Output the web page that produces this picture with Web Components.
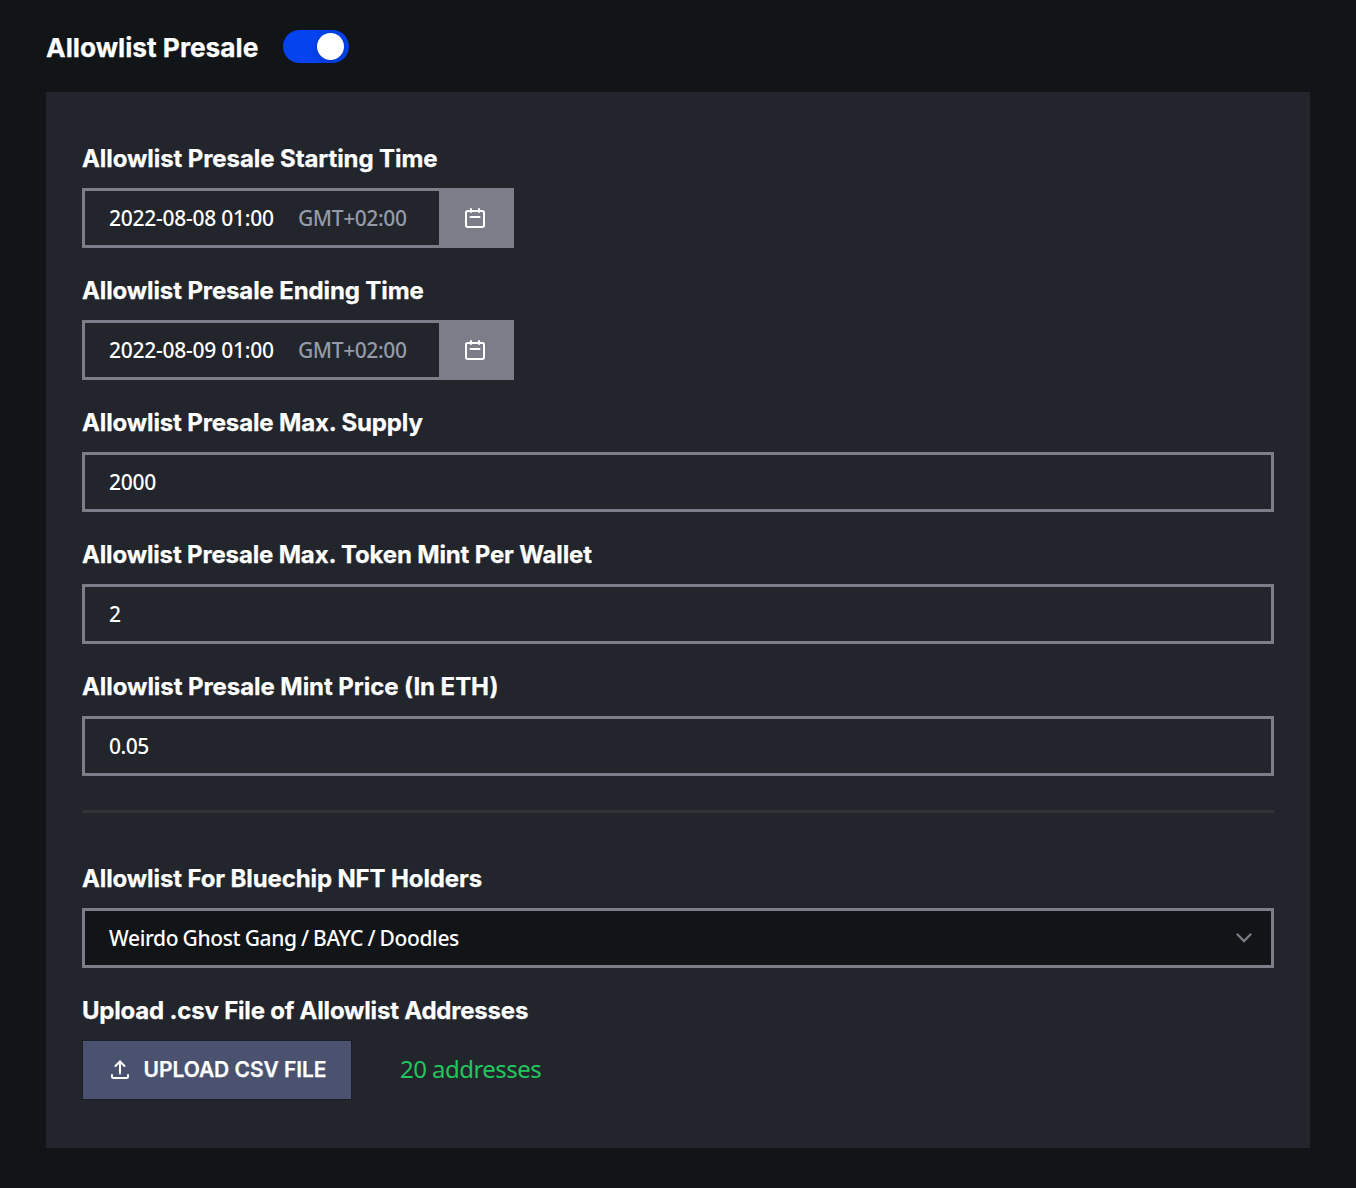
<!DOCTYPE html>
<html lang="en">
<head>
<meta charset="utf-8">
<title>Allowlist Presale</title>
<style>
html,body{margin:0;background:#111518;color:#fff;font-family:Inter,"Liberation Sans",sans-serif}
</style>
</head>
<body>
<presale-page></presale-page>
<script>
const define = (name, markup) => customElements.define(name, class extends HTMLElement {
  constructor() {
    super();
    this.attachShadow({ mode: 'open' }).innerHTML = markup;
  }
});

define('toggle-switch', `<style>
:host{display:flex;box-sizing:border-box;width:66px;height:33px;padding:3px 5px;border-radius:17px;background:#0443ee;justify-content:flex-end;align-items:center}
i{width:27px;height:27px;border-radius:50%;background:#fff;box-shadow:0 2px 6px rgba(0,20,80,.3)}
</style><i></i>`);

define('form-field', `<style>
:host{display:block}
.label{box-sizing:border-box;height:36px;padding-top:1px;line-height:36px;margin-bottom:12px;font-size:24px;font-weight:700;-webkit-text-stroke:.25px currentColor;white-space:nowrap}
</style><div class="label"><slot name="label"></slot></div><slot></slot>`);

define('text-box', `<style>
:host{display:flex;align-items:center;box-sizing:border-box;height:60px;border:3px solid #7b7e88;padding:0 24px;font:500 21px/30px "Noto Sans","Open Sans",sans-serif;white-space:nowrap}
span{letter-spacing:var(--track,-.25px)}
</style><span><slot></slot></span>`);

define('date-box', `<style>
:host{display:flex;box-sizing:border-box;width:432px;height:60px;border:3px solid #7b7e88;align-items:stretch;font:500 21px/55px "Noto Sans","Open Sans",sans-serif;white-space:nowrap}
.time{width:165px;margin:0 24px;letter-spacing:-.26px}
.zone{flex:1;color:#959aa8;letter-spacing:-.4px}
.cal{width:72px;background:#7b7e88;display:flex;align-items:center;justify-content:center}
svg{display:block}
</style><span class="time"><slot></slot></span><span class="zone"><slot name="zone"></slot></span>
<span class="cal"><svg width="24" height="24" viewBox="0 0 24 24" fill="none" stroke="#fff" stroke-width="2" stroke-linecap="round"><rect x="3" y="5" width="18" height="16" rx="1.700"/><path d="M8 3v3M16 3v3M7.500 11h9"/></svg></span>`);

define('select-box', `<style>
:host{display:flex;align-items:center;justify-content:space-between;box-sizing:border-box;height:60px;border:3px solid #7b7e88;padding:0 18px 0 24px;background:#111518;font:500 21px/30px "Noto Sans","Open Sans",sans-serif;white-space:nowrap}
span{letter-spacing:-.36px;word-spacing:-.75px}
</style><span><slot></slot></span><svg width="18" height="12" viewBox="0 0 18 12" fill="none" stroke="#7b7e88" stroke-width="2.300" stroke-linecap="round"><path d="M2.500 2.500L9 9l6.500-6.500"/></svg>`);

define('upload-button', `<style>
:host{display:flex;align-items:center;box-sizing:border-box;width:270px;height:60px;border:1px solid #1c1e25;background:#4a526f;padding:0 0 1px 25px;font-size:21px;font-weight:600;white-space:nowrap}
svg{margin:1px 11.500px 0 0;flex:none}
span{letter-spacing:-.05px;-webkit-text-stroke:.25px currentColor}
</style><svg width="24" height="24" viewBox="0 0 24 24" fill="none" stroke="#fff" stroke-width="2" stroke-linecap="round"><path d="M12 15.500V4M7.500 8L12 3.500 16.500 8M4 17v1.500q0 1.500 1.500 1.500h13q1.500 0 1.500-1.500V17"/></svg><span><slot></slot></span>`);

define('presale-page', `<style>
:host{display:block;box-sizing:border-box;height:1188px;padding:28px 46px 0;overflow:hidden}
header{display:flex;align-items:center;height:37px;margin-bottom:27px}
h1{margin:0;padding-top:1px;width:237px;font-size:26.300px;line-height:37px;font-weight:700;-webkit-text-stroke:.25px currentColor;white-space:nowrap}
section{box-sizing:border-box;height:1056px;background:#22252b;padding:48px 36px;display:flex;flex-direction:column;gap:24px}
hr{width:100%;height:3px;margin:10px 0 23px;border:0;background:#303338}
.row{display:flex;align-items:center;gap:48px}
.count{color:#22c55e;font:400 24px/36px "Noto Sans","Open Sans",sans-serif;letter-spacing:-.54px;padding-bottom:2px;white-space:nowrap}
</style>
<header><h1>Allowlist Presale</h1><toggle-switch></toggle-switch></header>
<section>
<form-field><span style="letter-spacing:-.085px" slot="label">Allowlist Presale Starting Time</span><date-box>2022-08-08 01:00<span slot="zone">GMT+02:00</span></date-box></form-field>
<form-field><span style="letter-spacing:-.125px" slot="label">Allowlist Presale Ending Time</span><date-box>2022-08-09 01:00<span slot="zone">GMT+02:00</span></date-box></form-field>
<form-field><span style="letter-spacing:-.14px" slot="label">Allowlist Presale Max. Supply</span><text-box>2000</text-box></form-field>
<form-field><span style="letter-spacing:-.16px" slot="label">Allowlist Presale Max. Token Mint Per Wallet</span><text-box style="--track:0">2</text-box></form-field>
<form-field><span style="letter-spacing:-.065px" slot="label">Allowlist Presale Mint Price (In ETH)</span><text-box style="--track:-.5px">0.05</text-box></form-field>
<hr>
<form-field><span style="letter-spacing:-.12px" slot="label">Allowlist For Bluechip NFT Holders</span><select-box>Weirdo Ghost Gang / BAYC / Doodles</select-box></form-field>
<form-field><span style="letter-spacing:-.2px" slot="label">Upload .csv File of Allowlist Addresses</span><div class="row"><upload-button>UPLOAD CSV FILE</upload-button><span class="count">20 addresses</span></div></form-field>
</section>`);
</script>
</body>
</html>
